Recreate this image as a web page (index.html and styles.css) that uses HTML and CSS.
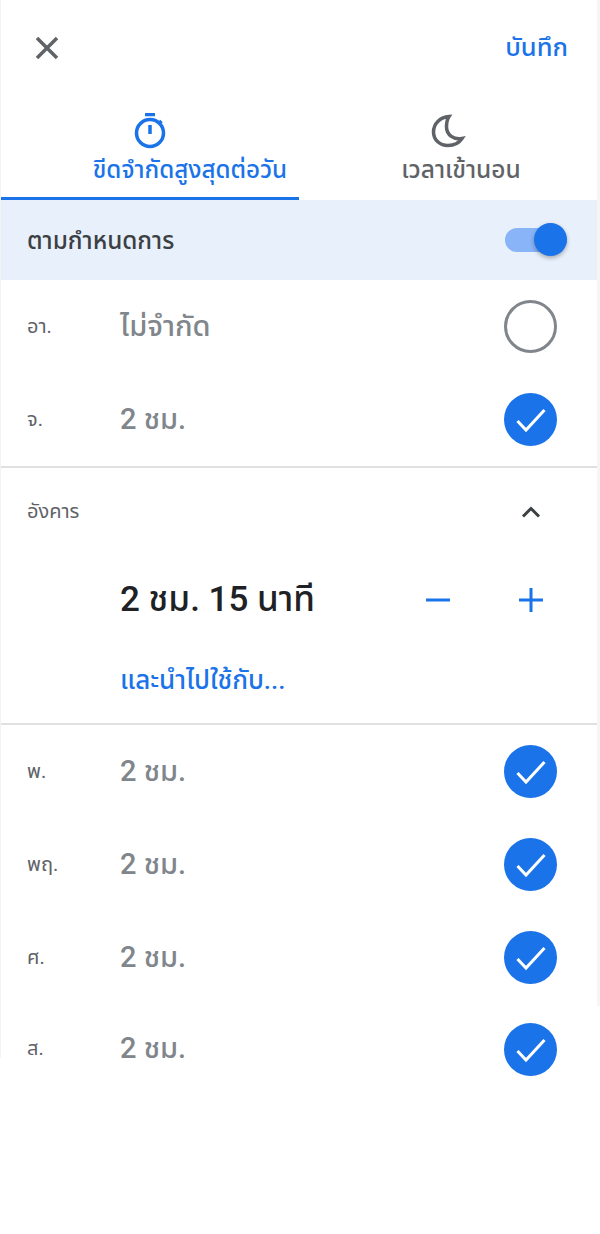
FILE: index.html
```html
<!DOCTYPE html>
<html lang="th">
<head>
    <meta charset="UTF-8">
    <meta name="viewport" content="width=device-width, initial-scale=1.0">
    <title>ขีดจำกัดสูงสุดต่อวัน</title>
    <link rel="stylesheet" href="styles.css">
</head>
<body>
    <div class="screen">
        <div class="edge-left"></div>
        <div class="edge-right"></div>
        <div class="topbar">
            <svg class="close" viewBox="0 0 26 26" width="26" height="26"><path d="M3 3L23 23M23 3L3 23"/></svg>
            <a class="save">บันทึก</a>
        </div>
        <div class="tabs">
            <div class="tab active">
                <svg class="tab-icon" viewBox="0 0 36 36" width="36" height="36">
                    <path d="M13 1.500H23M18 12V21"/>
                    <circle cx="18" cy="20" r="13.500"/>
                    <path d="M27.500 10L29.500 8"/>
                </svg>
                <span>ขีดจำกัดสูงสุดต่อวัน</span>
            </div>
            <div class="tab">
                <svg class="tab-icon" viewBox="0 0 36 36" width="36" height="36">
                    <path d="M19 3.500C10.500 4 3.500 10.500 3.500 19C3.500 27 10 32.500 18 32.500C24 32.500 29 30 32 25.500C24 27 16.500 22 16.500 14C16.500 10 17 6.500 19 3.500Z"/>
                </svg>
                <span>เวลาเข้านอน</span>
            </div>
        </div>
        <div class="schedule">
            <span class="schedule-label">ตามกำหนดการ</span>
            <div class="switch"><div class="knob"></div></div>
        </div>
        <div class="day">
            <span class="day-name">อา.</span>
            <span class="limit">ไม่จำกัด</span>
            <div class="mark off"></div>
        </div>
        <div class="day">
            <span class="day-name">จ.</span>
            <span class="limit">2 ชม.</span>
            <div class="mark"><svg viewBox="0 0 53 53" width="53" height="53"><path d="M13.500 28L22 37L40.500 17"/></svg></div>
        </div>
        <div class="editor">
            <div class="editor-head">
                <span class="day-name">อังคาร</span>
                <svg class="chevron" viewBox="0 0 20 12" width="20" height="12"><path d="M2 10.500L10 2.500L18 10.500"/></svg>
            </div>
            <div class="editor-value">
                <span class="amount">2 ชม. 15 นาที</span>
                <div class="stepper">
                    <svg viewBox="0 0 24 24" width="24" height="24"><path d="M0 12H24"/></svg>
                    <svg viewBox="0 0 24 24" width="24" height="24"><path d="M0 12H24M12 0V24"/></svg>
                </div>
            </div>
            <a class="apply">และนำไปใช้กับ...</a>
        </div>
        <div class="day">
            <span class="day-name">พ.</span>
            <span class="limit">2 ชม.</span>
            <div class="mark"><svg viewBox="0 0 53 53" width="53" height="53"><path d="M13.500 28L22 37L40.500 17"/></svg></div>
        </div>
        <div class="day">
            <span class="day-name">พฤ.</span>
            <span class="limit">2 ชม.</span>
            <div class="mark"><svg viewBox="0 0 53 53" width="53" height="53"><path d="M13.500 28L22 37L40.500 17"/></svg></div>
        </div>
        <div class="day">
            <span class="day-name">ศ.</span>
            <span class="limit">2 ชม.</span>
            <div class="mark"><svg viewBox="0 0 53 53" width="53" height="53"><path d="M13.500 28L22 37L40.500 17"/></svg></div>
        </div>
        <div class="day last">
            <span class="day-name">ส.</span>
            <span class="limit">2 ชม.</span>
            <div class="mark"><svg viewBox="0 0 53 53" width="53" height="53"><path d="M13.500 28L22 37L40.500 17"/></svg></div>
        </div>
    </div>
</body>
</html>
```

FILE: styles.css
```css
html, body {
    margin: 0;
    background: #fff;
}
body {
    font-family: Roboto, "Noto Sans", "Noto Sans Thai", "Liberation Sans", sans-serif;
    color: #3c4043;
}
.screen {
    position: relative;
    width: 597px;
}
.edge-left {
    position: absolute;
    left: 0;
    top: 0;
    width: 1px;
    height: 1058px;
    background: #f3f3f3;
}
.edge-right {
    position: absolute;
    left: 597px;
    top: 0;
    width: 3px;
    height: 1006px;
    background: #f5f5f5;
}
.topbar {
    height: 96px;
    display: flex;
    align-items: center;
    justify-content: space-between;
    padding: 0 29px 0 34px;
}
.close path {
    fill: none;
    stroke: #5f6368;
    stroke-width: 3.5;
}
.save {
    font-size: 25.5px;
    font-weight: 500;
    color: #1a73e8;
}
.tabs {
    display: flex;
    height: 104px;
    padding-left: 1px;
}
.tab {
    width: 298px;
    box-sizing: border-box;
    height: 104px;
    padding-top: 17px;
    display: flex;
    flex-direction: column;
    align-items: center;
    font-size: 24.5px;
    font-weight: 500;
    color: #5f6368;
}
.tab.active {
    color: #1a73e8;
    border-bottom: 3px solid #1a73e8;
    font-size: 24.2px;
}
.tab span {
    line-height: 34px;
    margin: 4px 0 0 26px;
    white-space: nowrap;
}
.tab.active span {
    margin-left: 80px;
}
.tab-icon path, .tab-icon circle {
    fill: none;
    stroke: currentColor;
    stroke-width: 3.5;
}
.schedule {
    height: 80px;
    background: #e8f0fb;
    display: flex;
    align-items: center;
    justify-content: space-between;
    padding: 0 30px 0 27px;
    font-size: 24.3px;
    font-weight: 500;
}
.schedule-label {
    padding-top: 3px;
}
.switch {
    width: 62px;
    height: 24px;
    border-radius: 12px;
    background: #8ab4f8;
    position: relative;
}
.knob {
    position: absolute;
    right: 0;
    top: -5px;
    width: 33px;
    height: 33px;
    border-radius: 50%;
    background: #1a73e8;
    box-shadow: 0 2px 4px rgba(0, 0, 0, 0.3);
}
.day {
    height: 93px;
    display: flex;
    align-items: center;
    padding: 0 40px 0 27px;
}
.day.last {
    height: 90px;
}
.day-name {
    width: 93px;
    font-size: 20px;
    color: #5f6368;
}
.limit {
    flex: 1;
    font-size: 29px;
    font-weight: 500;
    color: #80868b;
}
.mark {
    width: 53px;
    height: 53px;
    border-radius: 50%;
    background: #1a73e8;
}
.mark svg {
    display: block;
}
.mark path {
    fill: none;
    stroke: #fff;
    stroke-width: 3;
}
.mark.off {
    box-sizing: border-box;
    background: none;
    border: 3px solid #80868b;
}
.editor {
    height: 259px;
    box-sizing: border-box;
    border-top: 2px solid #e0e0e0;
    border-bottom: 2px solid #e0e0e0;
    padding: 0 40px 0 27px;
}
.editor-head {
    height: 87px;
    display: flex;
    align-items: center;
    justify-content: space-between;
    padding-right: 16px;
}
.chevron path {
    fill: none;
    stroke: #3c4043;
    stroke-width: 3;
}
.editor-value {
    height: 90px;
    display: flex;
    align-items: center;
    justify-content: space-between;
    padding-left: 93px;
}
.amount {
    font-size: 35px;
    font-weight: 500;
    color: #202124;
}
.stepper {
    display: flex;
    gap: 69px;
    padding-right: 14px;
}
.stepper path {
    fill: none;
    stroke: #1a73e8;
    stroke-width: 3;
}
.apply {
    display: block;
    margin-left: 93px;
    margin-top: 16px;
    font-size: 26px;
    font-weight: 500;
    color: #1a73e8;
}
```
